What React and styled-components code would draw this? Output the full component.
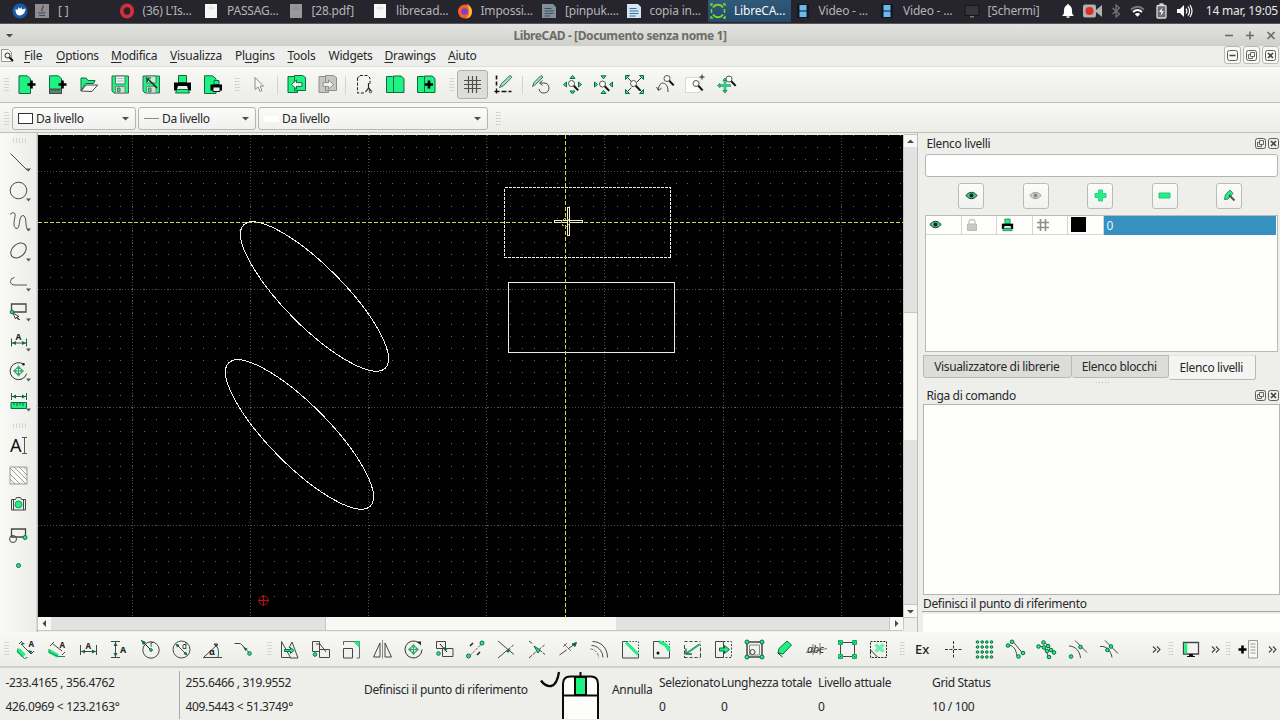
import styled, { createGlobalStyle, css } from 'styled-components';

const G = '#1ff283';
const DG = '#0d6b3f';
const K = '#444745';

const GlobalStyle = createGlobalStyle`
  * {
    box-sizing: border-box;
  }

  body {
    margin: 0;
    overflow: hidden;
    font-family: 'Noto Sans', 'Open Sans', sans-serif;
    font-size: 12px;
    letter-spacing: -0.34px;
    color: #26282a;
    background: #eeeeeb;
  }

  svg {
    display: block;
    flex: none;
    overflow: visible;
  }
`;

const Window = styled.div`
  width: 1280px;
  height: 720px;
  display: flex;
  flex-direction: column;
  overflow: hidden;
  white-space: nowrap;
`;

/* ---------- desktop panel ---------- */

const Panel = styled.div`
  height: 24px;
  flex: none;
  display: flex;
  align-items: center;
  padding: 0 2px 2px 12px;
  background: #26252d;
  border-bottom: 1px solid #55555a;
  color: #b4b4b6;
  letter-spacing: -0.2px;
`;

const Tasks = styled.div`
  display: flex;
  margin-left: 4px;
  height: 22px;
`;

const Task = styled.div`
  width: 84.5px;
  height: 22px;
  display: flex;
  align-items: center;
  gap: 8px;
  padding-left: 2px;
  color: ${p => (p.$active ? '#f4f6f8' : '#b4b4b6')};
  background: ${p => (p.$active ? 'linear-gradient(#31597a, #244a68) 0 0 / 83px 100% no-repeat' : 'none')};

  svg {
    opacity: ${p => (p.$dim ? 0.55 : 1)};
  }
`;

const Tray = styled.div`
  display: flex;
  align-items: center;
  gap: 3px;
  margin-left: auto;
`;

const TrayIcon = styled.div`
  width: ${p => p.$w || 20}px;
  display: flex;
  justify-content: center;
`;

const Clock = styled.span`
  margin-left: 7px;
  color: #e8e8e8;
`;

/* ---------- window frame ---------- */

const TitleBar = styled.div`
  height: 22px;
  flex: none;
  display: grid;
  grid-template-columns: 32px 1fr 72px;
  align-items: center;
  background: linear-gradient(#e3e4e0, #cfd0cb);
  color: #6b6d69;
  font-weight: bold;
  letter-spacing: -0.4px;
  text-align: center;

  > svg:first-child {
    margin-left: 5px;
  }
`;

const Title = styled.div`
  padding-top: 1px;
`;

const WindowButtons = styled.div`
  display: flex;
  justify-content: flex-end;
  gap: 10px;
  padding-right: 4px;
`;

const MenuBar = styled.div`
  height: 21px;
  flex: none;
  display: flex;
  align-items: center;
  background: #eeefec;
  border-bottom: 1px solid #dfe0dc;
  padding: 0 0 2px 1px;
  letter-spacing: -0.25px;
`;

const MenuItem = styled.div`
  width: ${p => p.$w}px;

  u {
    text-underline-offset: 2px;
  }
`;

const MdiButtons = styled.div`
  display: flex;
  gap: 2px;
  margin-left: auto;
  padding-right: 1px;
`;

const MdiButton = styled.div`
  width: 17px;
  height: 18px;
  display: grid;
  place-items: center;
  border: 1px solid #b7b8b4;
  border-radius: 3px;
  background: #f8f8f6;
`;

/* ---------- toolbars ---------- */

const barFill = css`
  background: linear-gradient(#f8f9f5, #ecede9);
`;

const ToolBar = styled.div`
  height: ${p => p.$h}px;
  flex: none;
  display: flex;
  align-items: center;
  padding-top: ${p => p.$top || 0}px;
  ${barFill}
  border-bottom: ${p => p.$line || '1px solid #bfc0bc'};
`;

const Grip = styled.div`
  width: ${p => p.$w}px;
  height: 16px;
  flex: none;
  background: radial-gradient(circle, #c3c4c0 0.7px, transparent 1px) 0 0 / 2.6px 3px;
  background-clip: content-box;
  padding: 0 ${p => p.$r || 5}px 0 ${p => p.$l || 5}px;
`;

const Separator = styled.div`
  width: ${p => p.$w}px;
  height: 18px;
  flex: none;
  background: linear-gradient(#d3d4d0, #d3d4d0) center / 1px 100% no-repeat;
`;

const Tool = styled.div`
  width: 31px;
  height: 29px;
  flex: none;
  display: grid;
  place-items: center;
  border: 1px solid ${p => (p.$on ? '#aeb0ac' : 'transparent')};
  border-radius: 3px;
  background: ${p => (p.$on ? '#dcddd9' : 'none')};
`;

const More = styled.div`
  width: ${p => p.$w}px;
  display: grid;
  place-items: center;
`;

const Spacer = styled.div`
  flex: 1;
`;

const Combo = styled.div`
  width: ${p => p.$w}px;
  height: 23px;
  display: flex;
  align-items: center;
  gap: 3px;
  margin-right: 2px;
  padding: 0 5px 0 5px;
  border: 1px solid #b4b5b1;
  border-radius: 3px;
  background: linear-gradient(#fbfbf9, #f0f1ee);

  svg:last-child {
    margin-left: auto;
  }
`;

const Swatch = styled.span`
  width: 15px;
  height: ${p => (p.$plain ? 6 : 11)}px;
  border: ${p => (p.$plain ? 'none' : '1px solid #333')};
  background: #fff;
`;

const LineSample = styled.span`
  width: 15px;
  height: 1px;
  background: #8a8b88;
`;

/* ---------- main area ---------- */

const Main = styled.div`
  height: 499px;
  flex: none;
  display: flex;
  background: #eeeeeb;
`;

const SideBar = styled.div`
  width: 38px;
  flex: none;
  padding-top: 4px;
  background: linear-gradient(90deg, #f9faf6, #ecede9);
  border-right: 1px solid #b5b6b2;
  box-shadow: inset -1px 0 #d8d9d5;
`;

const SideGrip = styled.div`
  height: ${p => p.$h}px;
  padding: ${p => p.$top}px 9px 0 12px;

  &::before {
    content: '';
    display: block;
    height: 5px;
    background: radial-gradient(circle, #c3c4c0 0.7px, transparent 1px) 0 0 / 3px 2.6px;
  }
`;

const SideTool = styled.div`
  height: 30px;
  display: flex;
  align-items: center;
  padding-left: 8px;
`;

const MenuMark = styled.svg`
  margin-top: 18px;
  margin-left: -4px;
`;

const View = styled.div`
  width: 880px;
  flex: none;
  display: grid;
  grid-template-columns: 865px 14px;
  grid-template-rows: 482px 14px;
  padding-top: 2px;
  border-right: 1px solid #bcbdb9;
`;

const Canvas = styled.svg`
  overflow: hidden;
`;

const ScrollBar = styled.div`
  display: flex;
  flex-direction: ${p => (p.$vertical ? 'column' : 'row')};
  background: #e3e4e1;
  border: solid #c6c7c3;
  border-width: ${p => (p.$vertical ? '0 0 0 1px' : '0 0 1px 0')};
`;

const ScrollPart = styled.div`
  flex: 0 0 ${p => p.$s}px;
  display: grid;
  place-items: center;
  background: ${p => (p.$track ? '#e2e3e0' : '#f8f8f5')};
  box-shadow: ${p => (p.$track ? 'none' : '0 0 0 1px #c6c7c3')};
  clip-path: inset(${p => (p.$vertical ? '-1px 0' : '0 -1px')});
`;

const Docks = styled.div`
  flex: 1;
  padding-left: 4px;
  display: flex;
  flex-direction: column;
`;

const DockTitle = styled.div`
  height: ${p => p.$h}px;
  display: flex;
  align-items: center;
  gap: 2px;
  padding: ${p => p.$top || 0}px 1.5px 0 4.5px;

  span {
    flex: 1;
  }
`;

const Filter = styled.div`
  height: 23px;
  margin: 0 2px 0 3px;
  background: #fff;
  border: 1px solid #b4b5b1;
  border-radius: 3px;
`;

const LayerActions = styled.div`
  display: flex;
  gap: 38.5px;
  padding: 6px 0 5px 36px;
`;

const LayerButton = styled.div`
  width: 26px;
  height: 26px;
  margin-bottom: 1px;
  display: grid;
  place-items: center;
  border: 1px solid #bbbcb8;
  border-radius: 3px;
  background: linear-gradient(#fcfcfa, #f1f2ef);
`;

const LayerList = styled.div`
  height: 137px;
  margin: 0 2px 0 3px;
  padding-right: 1px;
  background: #fefefc;
  border: 1px solid #b9bab6;
`;

const LayerRow = styled.div`
  height: 19px;
  display: grid;
  grid-template-columns: repeat(5, 35.5px) 1fr;
`;

const LayerCell = styled.div`
  display: flex;
  align-items: center;
  padding-left: 3px;
  border-right: 1px solid #d5d6d2;
  border-bottom: 1px solid #d5d6d2;
`;

const LayerName = styled.div`
  padding-left: 3px;
  line-height: 19px;
  color: #e3f1fa;
  background: #3690c0;
`;

const ColorChip = styled.div`
  width: 15px;
  height: 15px;
  background: #000;
`;

const Tabs = styled.div`
  display: flex;
  align-items: flex-start;
  height: 28px;
  margin-left: 1px;
  padding-top: 3px;
`;

const Tab = styled.div`
  width: ${p => p.$w}px;
  height: ${p => (p.$on ? 25 : 23)}px;
  line-height: ${p => (p.$on ? 23.5 : 22)}px;
  padding-right: 1.5px;
  text-align: center;
  background: ${p => (p.$on ? '#f4f5f2' : '#dcddda')};
  border: 1px solid #b9bab6;
  border-top-color: ${p => (p.$on ? '#e4e5e1' : '#b9bab6')};
  border-left-width: ${p => (p.$first ? 1 : 0)}px;
  border-radius: 0 0 3px 3px;
`;

const DockHandle = styled.div`
  height: 6px;
  margin: 0 169px 0 173px;
  background: radial-gradient(circle, #b9bab6 0.7px, transparent 1px) 0 1px / 3px 3px repeat-x;
`;

const History = styled.div`
  height: 192px;
  margin-left: 1px;
  border: 1px solid #b4b5b1;
  background: #fefefc;
`;

const Prompt = styled.div`
  height: 17px;
  padding-left: 1px;
  line-height: 17px;
  border-bottom: 1px solid #a3a4a1;
`;

const CommandInput = styled.div`
  height: 18px;
  margin: 2px 0 0 1px;
  background: #fefefc;
`;

/* ---------- status bar ---------- */

const StatusBar = styled.div`
  flex: 1;
  display: flex;
  padding: 3px 0 2px;
  background: #eeeeeb;
`;

const Pair = styled.div`
  width: ${p => p.$w}px;
  flex: none;
  padding-left: ${p => p.$l || 0}px;
  line-height: 23.5px;
  border-right: ${p => (p.$line ? '1px solid #a9aaa7' : 'none')};
`;

const Hint = styled.div`
  width: ${p => p.$w}px;
  flex: none;
  padding-left: ${p => p.$l || 0}px;
  line-height: 37px;
`;

/* ---------- icon parts ---------- */

const Svg = ({ w = 21, h = 21, children }) => (
  <svg width={w} height={h} viewBox={`0 0 ${w} ${h}`} fill="none" stroke={K} strokeWidth="1">
    {children}
  </svg>
);

const Mag = ({ x, y }) => (
  <g>
    <circle cx={x} cy={y} r="3" fill="#fafaf8" stroke="#555" />
    <path d={`M${x + 2.3} ${y + 2.3}l4.4 4.6`} stroke="#111" strokeWidth="2" />
  </g>
);

const Node = ({ x, y, r = 1.8 }) => <circle cx={x} cy={y} r={r} fill={G} stroke={DG} />;

const Letter = ({ x, y, size = 8, weight = 'bold', fill = '#222', children, ...rest }) => (
  <text x={x} y={y} fontSize={size} fontWeight={weight} fill={fill} stroke="none" letterSpacing="0" {...rest}>
    {children}
  </text>
);

const Plus = ({ x, y }) => <path d={`M${x - 4} ${y}h8M${x} ${y - 4}v8`} stroke="#000" strokeWidth="2.6" />;

const Move = ({ x, y }) => (
  <path
    d={`M${x - 3} ${y}h6M${x} ${y - 3}v6M${x - 1.7} ${y - 2.7}l1.7 -2l1.7 2zM${x - 1.7} ${y + 2.7}l1.7 2l1.7 -2zM${x - 2.7} ${y - 1.7}l-2 1.7l2 1.7zM${x + 2.7} ${y - 1.7}l2 1.7l-2 1.7z`}
    stroke="#35a972"
    strokeWidth="1.2"
    fill="#35c984"
  />
);

const Printer = () => (
  <>
    <path d="M6.5 1.5h8v7h-8z" fill={G} stroke={DG} />
    <path d="M2 8.5h17v8h-17z" fill="#000" stroke="none" />
    <path d="M6 12h9l1 3h-11z" fill="#eee" stroke="none" />
    <path d="M5 15.5h11l1.5 3.5h-14z" fill={G} stroke={DG} />
  </>
);

const Page = ({ x, fill = G, stroke = DG }) => (
  <path d={`M${x} 2.5h6l3.5 2v14h-9.5z`} fill={fill} stroke={stroke} />
);

const icons = {
  newDoc: <><path d="M2 1.8h8l3.5 3v14.7h-11.5z" fill={G} stroke={DG} /><Plus x={14.5} y={10.5} /></>,
  newTemplate: <><path d="M1.5 1.8h9l3 3v14.7h-12z" fill={G} stroke={DG} /><path d="M1.5 15h12v4.5h-12z" fill="#4f8a6c" /><path d="M4 15v2M7 15v2M10 15v2" /><Plus x={14.5} y={10.5} /></>,
  open: <><path d="M2 17v-13h5l2 2.5h7l-1.5 3h-8z" fill={G} stroke={DG} /><path d="M2 17l5 -6h11.8l-6 6.5z" fill="#f6f6f3" /></>,
  save: <><path d="M2 2h16.500v17h-14.500l-2 -2z" fill={G} stroke="#2f6b4c" /><path d="M5.500 2h9.500v8h-9.500z" fill="#eff1ee" stroke="#4c7a62" /><path d="M7 4.500h6.500M7 7h6.500" stroke="#b3beb7" /><path d="M5.500 12.500h9.500v6.500h-9.500z" fill="#d5dcd8" stroke="#7a877f" /><path d="M7.500 14h2.500v4h-2.500z" fill={G} stroke="#4c7a62" /></>,
  saveAs: <><path d="M2 2h16.500v17h-14.500l-2 -2z" fill={G} stroke="#2f6b4c" /><path d="M5.500 2h9.500v7h-9.500z" fill="#b9f3d4" stroke="#4c7a62" /><path d="M5.500 12.500h9.500v6.500h-9.500z" fill="#d5dcd8" stroke="#7a877f" /><path d="M7.500 14h2.500v4h-2.500z" fill={G} stroke="#4c7a62" /><path d="M7 5l9 9" stroke="#222" strokeWidth="1.5" /><path d="M10 4l-4 0l.5 4" stroke="#222" /></>,
  print: <Printer />,
  printPreview: <><path d="M1.5 1.8h8l3.5 3v14.7h-11.5z" fill={G} stroke={DG} /><path d="M11 6.5h5v4h-5z" fill={G} stroke={DG} /><path d="M7.5 10.5h11.5v6h-11.5z" fill="#000" stroke="none" /><path d="M10 13h7v4.5h-7z" fill="#e9efe9" stroke="#111" /></>,
  pointer: <path d="M7 3.5v12l3 -2.5l2 4.5l2 -1l-2 -4.3h3.5z" fill="#f9f9f7" stroke="#8b8c89" />,
  undo: <><Page x={2} /><path d="M8.5 1.5h8l3 2v13h-11z" fill={G} stroke={DG} /><path d="M5.5 10.5l5 -4.5v2.7h5.5v3.6h-5.5v2.7z" fill="#f2fff8" stroke={DG} /></>,
  redo: <><Page x={2} fill="#c6c7c4" stroke="#8d8e8b" /><path d="M8.5 1.5h8l3 2v13h-11z" fill="#c6c7c4" stroke="#8d8e8b" /><path d="M16.5 10.5l-5 -4.5v2.7h-5.5v3.6h5.5v2.7z" fill="#f4f4f2" stroke="#8d8e8b" /></>,
  cut: <><path d="M6 1.5h7.5l2.5 2.5v6M3.5 4l2.5 -2.5M3.5 4v15h8" strokeDasharray="3 1.6" stroke="#222" /><path d="M14.5 9v5l-3 4M14.5 14l2.5 3" stroke="#222" strokeWidth="1.2" /><circle cx="16.5" cy="17.5" r="1.3" /></>,
  copy: <><Page x={1.5} /><path d="M8.5 2h7.5l3 2.5v14h-10.5z" fill={G} stroke={DG} /></>,
  paste: <><Page x={1.5} /><path d="M8.5 2h7.5l3 2.5v14h-10.5z" fill={G} stroke={DG} /><Plus x={13} y={10.5} /></>,
  grid: <path d="M6.5 2v17M10.5 2v17M14.5 2v17M2 6.5h17M2 10.5h17M2 14.5h17" stroke="#4d4f4d" strokeWidth="1.2" />,
  draft: <><path d="M3.5 1.5v12" stroke="#111" strokeWidth="1.6" strokeDasharray="4 2" /><path d="M1.5 17.5h17" stroke="#111" strokeWidth="1.6" strokeDasharray="5 2" /><path d="M3.5 14.5v5" stroke="#111" strokeWidth="1.3" /><path d="M6.5 13.5l2 -4l8.5 -8l2 1.7l-8.5 8.5z" fill="#a6dcbf" stroke="#2c7a53" /></>,
  redraw: <><path d="M1.5 12.5l1.5 -4l7 -7l2 1.5l-7.5 7.5z" fill="#a6dcbf" stroke="#2c7a53" /><path d="M8 15a5 5 0 1 0 5 -6h-4M11.5 6.5l-3 2.5l3 2.5" /></>,
  zoomIn: <><Mag x={9.5} y={9.5} /><path d="M8 4.5h5l-2.5 -3zM8 17h5l-2.5 3zM4.5 8v5l-3 -2.5zM16.5 8v5l3 -2.5z" fill={G} stroke={DG} /></>,
  zoomOut: <><Mag x={9.5} y={10} /><path d="M8 1.8h5l-2.5 3zM8 19.5h5l-2.5 -3zM1.5 8v5l3 -2.5zM19.5 8v5l-3 -2.5z" fill={G} stroke={DG} /></>,
  zoomAuto: <><path d="M4 4l13 13M17 4l-13 13" stroke="#333" strokeDasharray="6 1" /><Mag x={9.5} y={9.5} /><path d="M1.5 1.5h4l-4 4zM19.5 1.5h-4l4 4zM1.5 19.5h4l-4 -4zM19.5 19.5h-4l4 -4z" fill={G} stroke={DG} /></>,
  zoomPrev: <><Mag x={12} y={4.5} /><path d="M3.5 16c0 -10 10 -9 9.5 2M1.5 13l2 3.5l3.2 -2.5" /></>,
  zoomWindow: <><path d="M-0.5 3.5h14.5v15h-14.5z" fill="#fdfdfc" stroke="#d8d9d5" /><Mag x={10} y={9.5} /><path d="M13.5 3h5M16 .5v5" stroke="#222" /></>,
  zoomPan: <><path d="M2 11.5h12M8 5.5v12" stroke="#3fc487" strokeWidth="3" /><path d="M6 6.5l2 -2.5l2 2.5zM6 16.5l2 2.5l2 -2.5zM3 9.5l-2.5 2l2.5 2z" fill={G} stroke="#2c8a5b" /><Mag x={12} y={5} /></>,

  dimAligned: <><path d="M2 11l6 6" stroke={G} strokeWidth="5" /><path d="M2 9.5l-.5 3l7 7l3 -1" stroke="#2c7a53" /><path d="M3 5l3 -3M18 12l-3 3M5 5l10 10" /><path d="M5 6l4 -1l-3 -2zM16 12l-4 -1l3 4z" fill={DG} stroke="none" /><Letter x={12.5} y={8}>A</Letter></>,
  dimLinear: <><path d="M2 12l9 5" stroke={G} strokeWidth="4" /><path d="M2 10l0 3l9 4.5l7 0" stroke="#2c7a53" /><path d="M3 7l4 -4M18 13l-3 3M6 5l9 7" /><Letter x={12.5} y={8.5}>A</Letter></>,
  dimHor: <><path d="M2.5 6v10M18.5 6v10M3 12.5h15" /><path d="M3 12.5l4 -2v4zM18 12.5l-4 -2v4z" fill={DG} stroke="none" /><Letter x={7.5} y={10}>A</Letter></>,
  dimVer: <><path d="M2 2.5h9M2 18.5h9M6.5 3v15" /><path d="M6.5 3l-2 4h4zM6.5 18l-2 -4h4z" fill={DG} stroke="none" /><Letter x={11} y={14} size={9}>A</Letter></>,
  dimRadial: <><circle cx="11" cy="11" r="8.2" /><path d="M1 1l10 10" stroke="#222" /><path d="M1 1l5 2l-3 3z" fill={DG} stroke="none" /><Node x={11} y={11} r={1.3} /><Letter x={10} y={8} size={8} weight="normal">r</Letter></>,
  dimDia: <><circle cx="10.5" cy="10.5" r="8.5" /><path d="M4.5 4.5l12 12" /><path d="M4.5 4.5l4 1.5l-2.5 2.5zM16.5 16.5l-4 -1.5l2.5 -2.5z" fill={DG} stroke="none" /><Letter x={11} y={10} size={8} weight="normal">d</Letter></>,
  dimAng: <><path d="M1 18.5h19M2 18l14 -13" /><path d="M12 5c5 3 5 8 4 13" stroke={DG} /><path d="M12 5l3.5 0l-1 3z" fill={DG} /><Letter x={7} y={16} size={9}>α</Letter></>,
  leader: <><path d="M1.5 4.5h6l8.5 9" /><path d="M10 8l4.5 1.5l-2 2.5z" fill={DG} stroke="none" /><Node x={16.5} y={14.5} /></>,

  moveCopy: <><path d="M2.5 2.5v16h9zM10 9l3 -6l6 16h-8" /><path d="M5.5 10.5h6v-2l3.5 3l-3.5 3v-2h-6z" fill={G} stroke={DG} /></>,
  copyRot: <><path d="M2.5 2.5h7v10h-7zM9.5 10.5h10v8h-10z" fill="#f0f0ed" /><path d="M6 5h4l6 8M9.5 10.5v-5" /><Node x={5} y={15.5} /></>,
  scale: <><path d="M2.5 9.5h9v9.5h-9z" /><path d="M2.5 6v-3.5h16v16.500h-3" stroke="#666" /><path d="M13 3h5v5z" fill={G} stroke={G} /></>,
  mirror: <><path d="M10.5 1v18.5" stroke="#888" /><path d="M8 4v14h-6.5zM13 4v14h6.5z" /></>,
  rotate: <><path d="M16 4a8.5 8.5 0 1 0 3 6.5" stroke="#333" /><path d="M14 2.5h4v4z" fill="#222" stroke="none" /><Move x={10.5} y={10.5} /></>,
  rotateTwo: <><path d="M2.5 2.5h9v7h-9zM8.5 9.5h10.5v8h-10.5z" fill="#f0f0ed" /><path d="M6 5l7 8" stroke="#222" /><path d="M9.5 8l4.5 1.5l-3 3z" fill={DG} stroke="none" /><Node x={4.5} y={14.5} /></>,
  revert: <><path d="M5 16.5l12 -12" stroke="#666" strokeDasharray="3 1" /><Node x={3.5} y={17} r={2} /><Node x={17} y={4} r={2} /><path d="M5 7l3 -3M12 16l3 -3" stroke="#222" strokeWidth="1.5" /></>,
  trim: <><path d="M2 2l10 8.5l-10 8.5M12 10.5l6 5" /><path d="M12 10.5l5.5 -4.5" strokeDasharray="3 1.5" /><path d="M10 11.5l5 -1.5l-3 4z" fill={DG} stroke="none" /></>,
  trimTwo: <><path d="M2 19l10 -9M2 2l4 3M12 10.5l6 5" strokeDasharray="4 1" /><path d="M12 10.5l5.5 -4.5" strokeDasharray="3 1.5" /><path d="M7 7l6 4l-2 3z" fill={G} stroke={DG} /></>,
  lengthen: <><path d="M1.5 16l14 -10" strokeDasharray="9 1.5" /><path d="M14 5l4.5 -1.5l-1.5 4z" fill={DG} stroke={DG} /><path d="M6 5l7 7M5 8l4 -4" stroke="#555" strokeWidth=".8" /></>,
  offset: <><path d="M3.5 2.5c8 0 15 6 15 16M2.5 6.5c6 0 11 5 11.5 12" /><path d="M1.5 10c4 0 8 4 8 8.5" stroke="#777" strokeDasharray="3 1" /></>,
  bevel: <><path d="M2.5 2.5h4l12 12v4.5h-16z" /><path d="M6.5 2.5h12v12" strokeDasharray="1.5 1.5" /><path d="M6 3.5l12 12" stroke={G} strokeWidth="3" /></>,
  fillet: <><path d="M2.5 2.5h6c5 1 9 5 10 10v6.5h-16z" /><path d="M8.5 2.5h10v10" strokeDasharray="1.5 1.5" /><path d="M8 3c5 1 9 4 10 9" stroke={G} strokeWidth="3.5" /><circle cx="7" cy="14" r="1.5" fill="#111" stroke="none" /></>,
  divide: <><path d="M2.5 2.5h16M2.5 18.5h16" strokeDasharray="3 2" /><path d="M2.5 6v13M18.5 18v-12" strokeDasharray="4 1.5" /><path d="M5 14l13 -9" stroke="#21a865" strokeWidth="2" /><path d="M4 9.5v5.5h6" stroke={DG} strokeWidth="1.3" /></>,
  stretch: <><path d="M10.5 2.5h-8v16h8" /><path d="M10.5 2.5h8v16h-8" strokeDasharray="2 1.5" /><path d="M10.5 2.5v16" /><path d="M6.5 9h5v-2.5l5 4l-5 4v-2.5h-5z" fill={G} stroke={DG} /></>,
  properties: <><path d="M3 3h15v15h-15z" strokeWidth="1.5" /><path d="M5.5 6h10v10h-10z" stroke="#888" /><Node x={3} y={3} r={2} /><Node x={18} y={3} r={2} /><Node x={3} y={18} r={2} /><Node x={18} y={18} r={2} /><circle cx="8.5" cy="13" r="2.5" /></>,
  attributes: <><path d="M3 14l1 -4.5l8 -7.5l4.5 4l-8.5 9z" fill={G} stroke={DG} /><path d="M3 14l4.5 4" stroke="#222" /></>,
  explodeText: <><Letter x={1} y={14} size={10.5} weight="normal" fontStyle="italic">abc</Letter><path d="M0 13.5l21 -4" stroke="#444" strokeWidth=".7" /><path d="M7 5v11M14 4v12" strokeWidth=".7" /></>,
  explode: <><path d="M3.5 3.5h14v14h-14z" /><path d="M1.5 1.5h4v4h-4zM15.5 1.5h4v4h-4zM1.5 15.5h4v4h-4zM15.5 15.5h4v4h-4z" fill={G} stroke="#18a860" /><path d="M2.5 2.5l2 2M16.5 4.5l2 -2M2.5 18.5l2 -2M16.5 16.5l2 2" stroke={DG} /></>,
  deleteSel: <><path d="M2.5 2.5h16v16h-16z" stroke="#222" strokeDasharray="2 1.2" /><path d="M7.5 5.5l8 7M15.5 5.5l-8 7" stroke="#6feeb0" strokeWidth="3.5" /><path d="M2.5 11l7 7M2.5 11v3" stroke="#333" /></>,

  ex: <Letter x={3} y={15} size={13} weight="500">Ex</Letter>,
  snapFree: <path d="M2 10.5h17M10.5 2v17" stroke="#333" strokeDasharray="3 1.5" />,
  snapGrid: [3.5, 8.2, 12.8, 17.5].map(x => [3, 8, 13, 18].map(y => <Node key={`${x}-${y}`} x={x} y={y} r={1.3} />)),
  snapEnd: <><path d="M3 6c5 0 8 4 9 11M8 2.5l9 11" /><Node x={3} y={6.5} /><Node x={7} y={2.8} /><Node x={18} y={14} /><Node x={13.5} y={17.5} /></>,
  snapOn: <><path d="M3 7c5 0 8 4 9 11M8 2.5l9 10" /><Node x={2.5} y={7.5} /><Node x={7.5} y={3.5} /><Node x={8} y={8.5} /><Node x={12} y={7} /><Node x={15} y={11} /><Node x={18} y={13.5} /><Node x={11} y={12} /><Node x={13} y={18} /></>,
  snapCenter: <><path d="M8 1.5l12 12M2 7c6 0 11 5 11.5 12" /><Node x={13.5} y={8} /><Node x={4} y={17.5} /></>,
  snapMiddle: <><path d="M7 1.5l13 13M2 7.5c6 -1 11 4 12 11" /><Node x={13} y={7.5} /><Node x={9.5} y={11} /></>,
  monitor: <><path d="M2.5 3.5h15v11.5h-15z" fill="#f4f5f2" strokeWidth="1.3" /><path d="M3.2 4.2h3v10.2h-3z" fill={G} stroke="none" /><path d="M8.5 15.5h3v2h-3zM6 17.5h8" fill="#111" stroke="#111" /></>,
  addPage: <><path d="M10.5 1.5h9v17.5h-9z" fill="#f7f7f5" stroke="#9a9b98" /><path d="M12.5 5h5M12.5 8h5M12.5 11h5M12.5 14h5" stroke="#999" /><Plus x={4.5} y={10.5} /></>,

  line: <path d="M2.5 2.5l17 17" />,
  circle: <circle cx="10.5" cy="9.5" r="8.3" />,
  curve: <path d="M2 3.5c3 -3 6 -2 5 2c-1 5 -2 10 1 12c5 1 2 -13 7 -13c4 1 2 8 4 13" stroke="#4b4d4b" />,
  ellipse: <ellipse cx="10.5" cy="9.5" rx="8.7" ry="6.3" transform="rotate(-42 10.5 9.5)" />,
  polyline: <path d="M6.500 6.500q-4 .5 -4 4t4.500 3.500h12" stroke="#555" />,
  select: <><path d="M3.5 3h14.5v8h-14.5z" strokeWidth="1.3" /><Node x={4} y={11} /><path d="M5 12l6 3.5l-2 .5l3 3M5 12l2.5 6l1 -2l2 3" fill="#f6f6f4" stroke="#444" /></>,
  dimension: <><path d="M3.5 7.5v8M18.5 7.5v8M4 12h14" stroke="#2c5a44" /><path d="M4 12l4 -2v4zM18 12l-4 -2v4z" fill={DG} stroke="none" /><Letter x={7.5} y={8.5} size={8.5}>A</Letter></>,
  modify: <><path d="M15.5 3.2a8.5 8.5 0 1 0 3.2 9.5" stroke="#333" /><circle cx="15.5" cy="3.2" r="1.3" fill="#222" stroke="none" /><Move x={10.5} y={10} /></>,
  measure: <><path d="M3.5 2v7M18.5 2v7M4 5.5h14" stroke="#2c5a44" /><path d="M4 5.5l4 -2v4zM18 5.5l-4 -2v4z" fill={DG} stroke="none" /><path d="M3 11.5h15.5v6h-15.5z" fill={G} stroke={DG} /><path d="M6 12v2M9 12v3M12 12v2M15 12v3" stroke={DG} /></>,
  text: <><Letter x={2} y={17} size={18} weight="normal" fill="#111">A</Letter><path d="M14 2.5h5M14 18.5h5M16.5 3v15" stroke="#555" /></>,
  hatch: <><path d="M2 2h17v17h-17z" fill="#fafaf8" stroke="#999" /><path d="M2 14l5 5M2 9l10 10M2 3l16 16M6 2l13 13M11 2l8 8M15.5 2l3.5 3.5" stroke="#888" strokeWidth=".8" /></>,
  image: <><path d="M3.5 4.5h4l1 -2h4l1 2h4v10.5h-14z" fill="#ededea" /><path d="M5.5 5v10M15.5 5v10" /><circle cx="10.5" cy="9.5" r="3.5" fill={G} stroke="#139c5a" /></>,
  block: <><path d="M3.5 4h14v8h-14z" strokeWidth="1.3" /><circle cx="5" cy="14" r="3.5" /><Node x={17} y={12.5} r={2} /></>,
  point: <Node x={10.5} y={10.5} r={2} />
};

const Icon = ({ name }) => <Svg>{icons[name]}</Svg>;
const ToolList = ({ names, on }) => names.map(n => <Tool key={n} $on={n === on}><Icon name={n} /></Tool>);

const Arrow = ({ dir = 'down' }) => {
  const turn = { down: 0, left: 90, up: 180, right: 270 }[dir];
  return (
    <svg width="9" height="9" viewBox="0 0 9 9">
      <path d="M1 3h7l-3.5 3.5z" fill="#4b4c4a" transform={`rotate(${turn} 4.5 4.5)`} />
    </svg>
  );
};

const Chevrons = () => (
  <Svg w={9} h={7}><path d="M1 .5l3 3l-3 3M5 .5l3 3l-3 3" stroke="#444" strokeWidth="1.1" /></Svg>
);

const BoxGlyph = ({ kind }) => (
  <Svg w={11} h={11}>
    <rect x=".5" y=".5" width="10" height="10" rx="2" stroke="#5b5d5a" />
    {kind === 'min' && <path d="M2.5 5.5h6" strokeWidth="1.5" />}
    {kind === 'float' && <path d="M4.5 2.5h4v4h-4zM6.5 6.5v2h-4v-4h2" strokeWidth=".8" />}
    {kind === 'close' && <path d="M3 3l5 5M8 3l-5 5" strokeWidth="1.7" />}
  </Svg>
);

const Eye = ({ off }) => (
  <Svg w={13} h={9}>
    <path d="M.8 4.5q5.7 -6.5 11.4 0q-5.7 6.5 -11.4 0z" fill={off ? '#d2d3d0' : '#4fc98c'} stroke={off ? '#999' : '#143d29'} />
    <circle cx="6.5" cy="4.5" r="2" fill={off ? '#888' : '#0b2c1b'} stroke="none" />
  </Svg>
);

/* ---------- panel icons ---------- */

const Mouse = () => (
  <Svg w={16} h={16}>
    <circle cx="8" cy="8" r="7.5" fill="#1a5ca8" stroke="none" />
    <path d="M3.5 6l2 1l1 -3l1.5 2l1.5 -2l.5 2.5l3.5 -1c0 3 -2 7 -6 7c-3 0 -4 -3 -4 -6.5z" fill="#fff" stroke="none" />
  </Svg>
);

const PaperIcon = () => (
  <Svg w={16} h={16}><path d="M2 1h12v14h-12z" fill="#f6f6f6" stroke="none" /><path d="M4 5h8M8 2v5" stroke="#ddd" /></Svg>
);

const WriterIcon = () => (
  <Svg w={16} h={16}><path d="M1 1h11l3 3v11h-14z" fill="#d3e7f3" stroke="none" /><path d="M3.5 5.5h7M3.5 8h9M3.5 10.5h9M3.5 13h6" stroke="#3f6f93" strokeWidth="1.2" /></Svg>
);

const VideoIcon = () => (
  <Svg w={16} h={16}><path d="M2 1h12v14h-12z" fill="#0c1a26" stroke="none" /><path d="M4.5 2h7v5.5h-7zM4.5 8.5h7v5.5h-7z" fill="#6db9ea" stroke="none" /></Svg>
);

const tasks = [
  { label: '[ ]', dim: true, icon: <Svg w={16} h={16}><rect x="1" y="1" width="14" height="14" fill="#e3e3e3" stroke="none" /><path d="M8.5 2.5c3 2 -3 3 0 6" stroke="#c25a10" strokeWidth="1.2" /><path d="M4 10h7.5M5 12.5h6" stroke="#4a6c94" strokeWidth="1.2" /></Svg> },
  { label: "(36) L'Is...", icon: <Svg w={16} h={16}><ellipse cx="8" cy="8" rx="5.2" ry="5.6" stroke="#d0303c" strokeWidth="3.8" /></Svg> },
  { label: 'PASSAG...', icon: <PaperIcon /> },
  { label: '[28.pdf]', dim: true, icon: <PaperIcon /> },
  { label: 'librecad...', icon: <PaperIcon /> },
  { label: 'Impossi...', icon: <Svg w={16} h={16}><circle cx="8" cy="8.5" r="7" fill="#f5602a" stroke="none" /><path d="M10 .5c4 3 6 7 4.5 11c-1 3 -4 4 -6 4c4 -2 5 -7 1.5 -15z" fill="#ffbd2f" stroke="none" /><circle cx="7.5" cy="8.5" r="3.3" fill="#7a3fd0" stroke="none" /></Svg> },
  { label: '[pinpuk....', dim: true, icon: <WriterIcon /> },
  { label: 'copia in...', icon: <WriterIcon /> },
  { label: 'LibreCA...', active: true, icon: <Svg w={16} h={16}><path d="M3 4.5a6 6 0 0 1 10 0M3 11.5a6 6 0 0 0 10 0" stroke="#79d32d" strokeWidth="2" /><path d="M1.5 6v4M14.5 6v4M1 3v-2h2M15 3v-2h-2M1 13v2h2M15 13v2h-2" stroke="#79d32d" strokeWidth="1.5" /></Svg> },
  { label: 'Video - ...', icon: <VideoIcon /> },
  { label: 'Video - ...', icon: <VideoIcon /> },
  { label: '[Schermi]', icon: <Svg w={16} h={16}><path d="M1 2.5h14v10h-14z" fill="#35363b" stroke="#15161a" /><path d="M6 13h4v1.5h-4z" fill="#777" stroke="none" /></Svg> }
];

const Desktop = () => (
  <Panel>
    <Mouse />
    <Tasks>
      {tasks.map((t, i) => (
        <Task key={i} $active={t.active} $dim={t.dim}>{t.icon}<span>{t.label}</span></Task>
      ))}
    </Tasks>
    <Tray>
      <TrayIcon><Svg w={14} h={16}><path d="M1 13c2 -2 2 -3 2 -6c0 -3 2 -5 4 -5s4 2 4 5c0 3 0 4 2 6z" fill="#fff" stroke="none" /><path d="M5.5 14h3M7 1v1" stroke="#fff" strokeWidth="1.5" /></Svg></TrayIcon>
      <TrayIcon $w={23}><Svg w={19} h={14}><rect x="0" y=".5" width="13" height="13" rx="2" fill="#aeb0b2" stroke="none" /><path d="M13 6l6 -5v12l-6 -5z" fill="#aeb0b2" stroke="none" /><circle cx="6.5" cy="7" r="4" fill="#e02c22" stroke="none" /></Svg></TrayIcon>
      <TrayIcon $w={18}><Svg w={10} h={14}><path d="M1.5 4l7 6l-3.5 3v-12l3.5 3l-7 6" stroke="#77787c" strokeWidth="1.2" /></Svg></TrayIcon>
      <TrayIcon $w={20}><Svg w={15} h={12}><path d="M1 4.5q6.5 -5.5 13 0" stroke="#77787c" strokeWidth="1.7" /><path d="M3 7q4.5 -4 9 0" stroke="#fff" strokeWidth="1.7" /><path d="M4.8 9q2.7 -2.2 5.4 0l-2.7 2.7z" fill="#fff" stroke="none" /></Svg></TrayIcon>
      <TrayIcon $w={21}><Svg w={11} h={16}><rect x="1" y="2.5" width="9" height="12.5" rx="1" stroke="#dcdcdc" strokeWidth="1.3" fill="#6c6d71" /><path d="M3.5 1.3h4" stroke="#dcdcdc" strokeWidth="2" /><path d="M6.5 4.5l-3.5 4.5h2.5l-1 4l3.5 -4.8h-2.5z" fill="#fff" stroke="none" /></Svg></TrayIcon>
      <TrayIcon $w={21}><Svg w={16} h={14}><path d="M0 5h3l4 -4v12l-4 -4h-3z" fill="#fff" stroke="none" /><path d="M9 4.5q1.8 2.5 0 5M11 2.5q3.2 4.5 0 9M13 1q4 6 0 12" stroke="#fff" strokeWidth="1.2" /></Svg></TrayIcon>
      <Clock>14 mar, 19:05</Clock>
    </Tray>
  </Panel>
);

/* ---------- drawing ---------- */

const STEP = 11.81;
const xs = Array.from({ length: 73 }, (_, i) => Math.round(132.3 + (i - 7) * STEP));
const ys = Array.from({ length: 40 }, (_, i) => Math.round(170.9 + (i - 3) * STEP));
const dots = ys.flatMap(y => xs.map(x => `M${x} ${y}h1v1h-1z`)).join('');
const majorX = [132, 250, 368, 486, 604, 723, 841];
const majorY = [171, 289, 407, 525];

const Drawing = () => (
  <Canvas width="865" height="482" viewBox="38 135 865 482" fill="none" shapeRendering="crispEdges">
    <path d="M38 135h865v482h-865z" fill="#000" />
    <path d={dots} fill="#666" />
    {majorX.map(x => <path key={x} d={`M${x + 0.5} 135v482`} stroke="#4b4b4b" strokeDasharray="1 2" />)}
    {majorY.map(y => <path key={y} d={`M38 ${y + 0.5}h865`} stroke="#4b4b4b" strokeDasharray="1 2" />)}
    {[[314.5, 296.5], [299.5, 434.5]].map(([x, y]) => (
      <ellipse key={x} cx={x} cy={y} rx="100.7" ry="30" transform={`rotate(45.3 ${x} ${y})`} stroke="#f4f4f4" />
    ))}
    <path d="M504.5 187.5h166v70h-166z" stroke="#ececec" strokeDasharray="3 1" />
    <path d="M508.5 282.5h166v70h-166z" stroke="#ececec" />
    <path d="M38 222.5h865" stroke="#d2cf6e" strokeDasharray="4 2" />
    <path d="M565.5 135v482" stroke="#dcd84e" strokeDasharray="4 2" />
    <path d="M554.5 220.5h28v2h-28z" fill="#000" stroke="#f0efcf" />
    <path d="M567.5 207.5h2v28h-2z" fill="#000" stroke="#f0efcf" />
    <circle cx="565.5" cy="222.5" r="4" stroke="#a9a832" strokeDasharray="3 1" />
    <g stroke="#b51212" shapeRendering="auto">
      <circle cx="263.5" cy="600.5" r="4.5" />
      <path d="M258 600.5h11M263.5 595v11" />
    </g>
  </Canvas>
);

const sideTools = ['line', 'circle', 'curve', 'ellipse', 'polyline', 'select', 'dimension', 'modify', 'measure'];

const menus = [
  ['F', 'ile', 32], ['O', 'ptions', 55], ['M', 'odifica', 59], ['V', 'isualizza', 65], ['Pl', 'u', 52.5, 'gins'],
  ['T', 'ools', 41], ['', '', 56, 'Widgets'], ['D', 'rawings', 63.5], ['A', 'iuto', 40]
];

const MenuLabel = ({ m: [a, b, , c] }) => {
  if (c) return <>{a}{b && <u>{b}</u>}{c}</>;
  return <><u>{a}</u>{b}</>;
};

const LayerDock = () => (
  <>
    <DockTitle $h={21}><span>Elenco livelli</span><BoxGlyph kind="float" /><BoxGlyph kind="close" /></DockTitle>
    <Filter />
    <LayerActions>
      <LayerButton><Eye /></LayerButton>
      <LayerButton><Eye off /></LayerButton>
      <LayerButton><Svg w={13} h={13}><path d="M4.5 1h4v3.5h3.5v4h-3.5v3.5h-4v-3.5h-3.5v-4h3.5z" fill={G} stroke="#2fd283" /></Svg></LayerButton>
      <LayerButton><Svg w={13} h={13}><path d="M1 4h11v5h-11z" fill={G} stroke="#2fc27b" /></Svg></LayerButton>
      <LayerButton><Svg w={13} h={13}><path d="M1.5 10.5l1 -5l4.5 -4.5l3 3.5l-5 5.5z" fill={G} stroke="#2c8a5b" /><path d="M6 6l5.5 5.5" stroke="#555" strokeWidth="2" /></Svg></LayerButton>
    </LayerActions>
    <LayerList>
      <LayerRow>
        <LayerCell><Eye /></LayerCell>
        <LayerCell><Svg w={14} h={14}><path d="M2.5 6h9v6.5h-9z" fill="#c9cac7" stroke="#bbb" /><path d="M4 6v-2q0 -2.5 3 -2.5t3 2.5v2" stroke="#c6c7c4" strokeWidth="1.3" /></Svg></LayerCell>
        <LayerCell>
          <svg width="15" height="14" viewBox="0 0 21 21" fill="none"><Printer /></svg>
        </LayerCell>
        <LayerCell><Svg w={14} h={14}><path d="M4.5 1v12M9.5 1v12M1 4.5h12M1 9.5h12" stroke="#8e8f8c" strokeWidth="1.6" /></Svg></LayerCell>
        <LayerCell><ColorChip /></LayerCell>
        <LayerName>0</LayerName>
      </LayerRow>
    </LayerList>
    <Tabs>
      <Tab $w={149} $first>Visualizzatore di librerie</Tab>
      <Tab $w={97}>Elenco blocchi</Tab>
      <Tab $w={87} $on>Elenco livelli</Tab>
    </Tabs>
  </>
);

const MouseHint = () => (
  <svg width="60" height="48" viewBox="0 -1 60 48" fill="none" stroke="#0a0a0a" strokeWidth="2">
    <path d="M1 8.5q4 6 10 5.500q6 -1 8 -14" strokeWidth="2.3" />
    <path d="M23 47v-35q0 -7.5 7 -7.5h21q7 0 7 7.5v35" fill="#fdfdfc" />
    <path d="M35 5h11v18h-11z" fill={G} />
    <path d="M23 23.5h35M40.5 0v5" />
  </svg>
);

export default function App() {
  return (
    <Window>
      <GlobalStyle />
      <Desktop />
      <TitleBar>
        <Arrow />
        <Title>LibreCAD - [Documento senza nome 1]</Title>
        <WindowButtons>
          <Svg w={11} h={11}><path d="M2 5.5h8" stroke="#6b6d69" strokeWidth="1.6" /></Svg>
          <Svg w={11} h={11}><path d="M2 5.5h8M6 1.5v8" stroke="#6b6d69" strokeWidth="1.6" /></Svg>
          <Svg w={11} h={11}><path d="M2.5 2l7 7M9.5 2l-7 7" stroke="#6b6d69" strokeWidth="1.6" /></Svg>
        </WindowButtons>
      </TitleBar>
      <MenuBar>
        <MenuItem $w={23}>
          <Svg w={13} h={13}><path d="M.5 .5h7l3 3v9h-10z" fill="#f9f9f7" stroke="#999" /><circle cx="6.5" cy="6.5" r="2.5" stroke="#222" /><path d="M8.5 8.5l3.5 3.5" stroke="#111" strokeWidth="2" /></Svg>
        </MenuItem>
        {menus.map(m => <MenuItem key={m.join()} $w={m[2]}><MenuLabel m={m} /></MenuItem>)}
        <MdiButtons>
          <MdiButton><BoxGlyph kind="min" /></MdiButton>
          <MdiButton><BoxGlyph kind="float" /></MdiButton>
          <MdiButton><BoxGlyph kind="close" /></MdiButton>
        </MdiButtons>
      </MenuBar>

      <ToolBar $h={36}>
        <Grip $w={11.5} $l={4} $r={2.5} />
        <ToolList names={['newDoc', 'newTemplate', 'open', 'save', 'saveAs', 'print', 'printPreview']} />
        <Grip $w={14} $l={6} $r={3} />
        <ToolList names={['pointer']} />
        <Separator $w={7} />
        <ToolList names={['undo', 'redo']} />
        <Separator $w={6} />
        <ToolList names={['cut', 'copy', 'paste']} />
        <Grip $w={15} $l={7} $r={3} />
        <ToolList names={['grid', 'draft']} on="grid" />
        <Separator $w={7} />
        <ToolList names={['redraw', 'zoomIn', 'zoomOut', 'zoomAuto', 'zoomPrev', 'zoomWindow', 'zoomPan']} />
      </ToolBar>
      <ToolBar $h={30} $top={2}>
        <Grip $w={12} $l={4} $r={3} />
        <Combo $w={124}><Swatch /><span>Da livello</span><Arrow /></Combo>
        <Combo $w={118}><LineSample /><span>Da livello</span><Arrow /></Combo>
        <Combo $w={230}><Swatch $plain /><span>Da livello</span><Arrow /></Combo>
        <Grip $w={16} $l={6} $r={5} />
      </ToolBar>

      <Main>
        <SideBar>
          <SideGrip $h={9} $top={1} />
          {sideTools.map(n => (
            <SideTool key={n}>
              <Icon name={n} />
              <MenuMark width="7" height="5" viewBox="0 0 7 5"><path d="M1 .5h5l-2.5 3z" fill="#555" /></MenuMark>
            </SideTool>
          ))}
          <SideGrip $h={14} $top={7} />
          {['text', 'hatch', 'image', 'block', 'point'].map(n => <SideTool key={n}><Icon name={n} /></SideTool>)}
        </SideBar>
        <View>
          <Drawing />
          <ScrollBar $vertical>
            <ScrollPart $vertical $s={12}><Arrow dir="up" /></ScrollPart>
            <ScrollPart $vertical $track $s={166} />
            <ScrollPart $vertical $s={127} />
            <ScrollPart $vertical $track $s={165} />
            <ScrollPart $vertical $s={12}><Arrow /></ScrollPart>
          </ScrollBar>
          <ScrollBar>
            <ScrollPart $s={13}><Arrow dir="left" /></ScrollPart>
            <ScrollPart $track $s={275} />
            <ScrollPart $s={290} />
            <ScrollPart $track $s={274} />
            <ScrollPart $s={13}><Arrow dir="right" /></ScrollPart>
          </ScrollBar>
        </View>
        <Docks>
          <LayerDock />
          <DockHandle />
          <DockTitle $h={18} $top={1}><span>Riga di comando</span><BoxGlyph kind="float" /><BoxGlyph kind="close" /></DockTitle>
          <History />
          <Prompt>Definisci il punto di riferimento</Prompt>
          <CommandInput />
        </Docks>
      </Main>

      <ToolBar $h={36} $line="2px solid #d0d1cd">
        <Grip $w={11} $l={4} $r={2} />
        <ToolList names={['dimAligned', 'dimLinear', 'dimHor', 'dimVer', 'dimRadial', 'dimDia', 'dimAng', 'leader']} />
        <Grip $w={14.5} $l={8} $r={1.5} />
        <ToolList
          names={['moveCopy', 'copyRot', 'scale', 'mirror', 'rotate', 'rotateTwo', 'revert', 'trim', 'trimTwo', 'lengthen',
            'offset', 'bevel', 'fillet', 'divide', 'stretch', 'properties', 'attributes', 'explodeText', 'explode', 'deleteSel']}
        />
        <Grip $w={13.5} $l={6} $r={2.5} />
        <ToolList names={['ex', 'snapFree', 'snapGrid', 'snapEnd', 'snapOn', 'snapCenter', 'snapMiddle']} />
        <Spacer />
        <More $w={20}><Chevrons /></More>
        <Grip $w={10} $l={2} $r={3} />
        <ToolList names={['monitor']} />
        <More $w={16}><Chevrons /></More>
        <Grip $w={10} $l={3} $r={2} />
        <ToolList names={['addPage']} />
        <More $w={16}><Chevrons /></More>
      </ToolBar>

      <StatusBar>
        <Pair $w={180} $l={5.5} $line>-233.4165 , 356.4762<br />426.0969 &lt; 123.2163°</Pair>
        <Pair $w={184} $l={5.5}>255.6466 , 319.9552<br />409.5443 &lt; 51.3749°</Pair>
        <Hint $w={176}>Definisci il punto di riferimento</Hint>
        <MouseHint />
        <Hint $w={59} $l={12}>Annulla</Hint>
        <Pair $w={62}>Selezionato<br />0</Pair>
        <Pair $w={97}>Lunghezza totale<br />0</Pair>
        <Pair $w={114}>Livello attuale<br />0</Pair>
        <Pair $w={90}>Grid Status<br />10 / 100</Pair>
      </StatusBar>
    </Window>
  );
}
